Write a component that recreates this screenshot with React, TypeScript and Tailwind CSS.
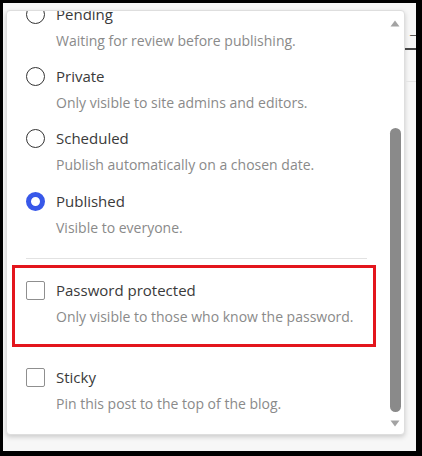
import React from "react";

const font = { fontFamily: '"Open Sans", "Noto Sans", sans-serif' };

function Radio({ checked }: { checked?: boolean }) {
  if (checked) {
    return (
      <span className="box-border h-[19px] w-[19px] shrink-0 rounded-full border-[5px] border-[#3858e9] bg-white" />
    );
  }
  return (
    <span className="box-border h-[19px] w-[19px] shrink-0 rounded-full border-[1.5px] border-[#333333] bg-white" />
  );
}

function Checkbox() {
  return (
    <span className="box-border h-[19px] w-[19px] shrink-0 rounded-[2px] border-[1.5px] border-[#8f8f8f] bg-white" />
  );
}

function Item({
  control,
  title,
  desc,
}: {
  control: React.ReactNode;
  title: string;
  desc: string;
}) {
  return (
    <div className="flex flex-col">
      <div className="flex h-[24px] items-center gap-[11px]">
        {control}
        <span className="text-[15px] leading-[24px] text-[#3a3a3a]">{title}</span>
      </div>
      <div className="mt-[5px] whitespace-nowrap pl-[30px] text-[14px] leading-[20px] text-[#8a8a8a]">{desc}</div>
    </div>
  );
}

export default function App() {
  return (
    <div
      className="box-border flex h-[456px] w-[422px] border-b-[5px] border-l-[3px] border-r-[6px] border-t-[3px] border-black bg-[#f7f7f7]"
      style={font}
    >
      <div className="flex flex-1 pl-[3px] pt-[7px]">
        <div className="box-border flex h-[425px] w-[399px] overflow-hidden rounded-[4px] border border-[#dedede] bg-white shadow-[0_2px_5px_rgba(0,0,0,0.18)]">
          <div className="flex flex-1 flex-col overflow-hidden pl-[19px] pr-[19px]">
            <div className="mt-[-9px] flex flex-col gap-[13px]">
              <Item control={<Radio />} title="Pending" desc="Waiting for review before publishing." />
              <Item control={<Radio />} title="Private" desc="Only visible to site admins and editors." />
              <Item control={<Radio />} title="Scheduled" desc="Publish automatically on a chosen date." />
              <div className="mt-px">
                <Item control={<Radio checked />} title="Published" desc="Visible to everyone." />
              </div>
            </div>
            <div className="mt-[20px] h-px bg-[#e2e2e2]" />
            <div className="ml-[-14px] mr-[-9px] mt-[6px] border-[3px] border-[#e3161d] pb-[17px] pl-[11px] pt-[10px]">
              <Item control={<Checkbox />} title="Password protected" desc="Only visible to those who know the password." />
            </div>
            <div className="mt-[18px]">
              <Item control={<Checkbox />} title="Sticky" desc="Pin this post to the top of the blog." />
            </div>
          </div>
          <div className="flex w-[18px] flex-col items-center pb-[5px] pt-[9px]">
            <svg width="10" height="7" viewBox="0 0 10 7" className="shrink-0">
              <path d="M5 0.5 L9.5 6.5 L0.5 6.5 Z" fill="#a3a3a3" />
            </svg>
            <div className="mt-[101px] h-[284px] w-[11px] rounded-[6px] bg-[#8a8a8a]" />
            <svg width="10" height="7" viewBox="0 0 10 7" className="mt-[8px] shrink-0">
              <path d="M0.5 0.5 L9.5 0.5 L5 6.5 Z" fill="#a3a3a3" />
            </svg>
          </div>
        </div>
      </div>
      <div className="flex w-[11px] flex-col overflow-hidden">
        <div className="mt-[29px] h-[16px] pl-[3px] text-[13px] leading-[16px] text-[#333]">ᄀ</div>
        <div className="h-[2px] bg-[#444]" />
        <div className="mt-[31px] h-px bg-[#e4e4e4]" />
      </div>
    </div>
  );
}
